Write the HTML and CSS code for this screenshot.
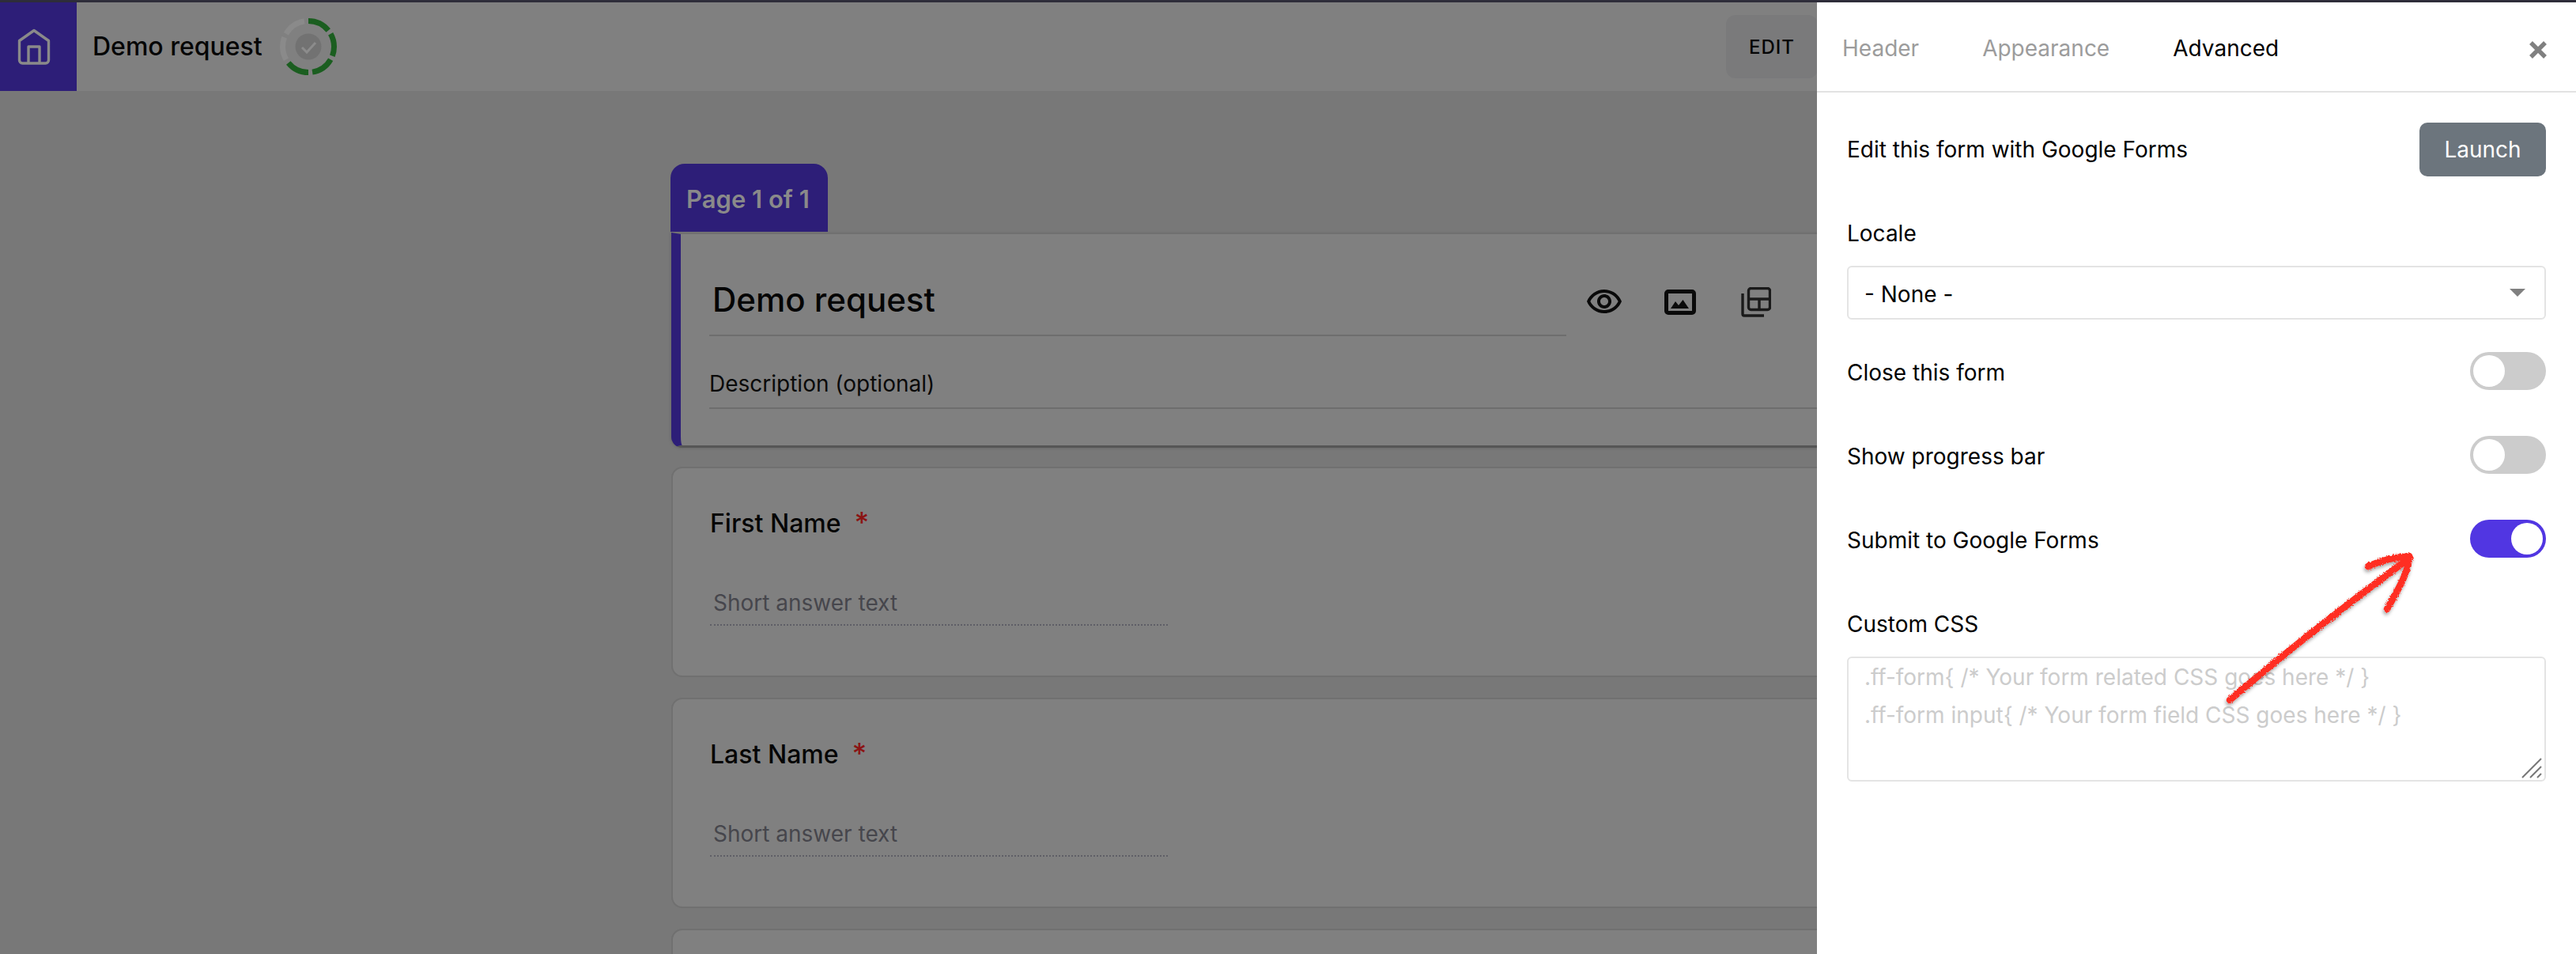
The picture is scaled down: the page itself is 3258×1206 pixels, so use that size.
FILE: index.html
```html
<!DOCTYPE html>
<html lang="en">
<head>
<meta charset="utf-8">
<title>Demo request</title>
<link rel="stylesheet" href="styles.css">
</head>
<body>
<div class="strip"></div>
<div class="app">
  <header class="topbar">
    <a class="home">
      <svg class="home-icon" width="42" height="46" viewBox="0 0 42 46"><path d="M2.500 15.500 21 2.500l18.500 13V40a4 4 0 0 1-4 4h-29a4 4 0 0 1-4-4z M14 44V23h14v21" fill="none" stroke="#8a8a8a" stroke-width="3.400" stroke-linejoin="round"/></svg>
    </a>
    <h1 class="app-title">Demo request</h1>
    <svg class="status" width="74" height="74" viewBox="0 0 74 74">
      <circle cx="37" cy="37" r="32.500" fill="none" stroke="#1b5e20" stroke-width="7" pathLength="360" stroke-dasharray="51 9 51 9 51 9 51 129" transform="rotate(-90 37 37)"/>
      <circle cx="37" cy="37" r="32.500" fill="none" stroke="#8a8a8a" stroke-width="7" pathLength="360" stroke-dasharray="0 240 51 9 51 9" transform="rotate(-90 37 37)"/>
      <circle cx="37" cy="37" r="16.500" fill="#727272"/>
      <path d="M29 38l6 6 11-12" fill="none" stroke="#8c8c8c" stroke-width="3"/>
    </svg>
    <button class="edit">EDIT</button>
  </header>

  <main class="canvas">
    <div class="form">
      <div class="page-tab">Page 1 of 1</div>
      <section class="card card-head">
        <div class="head-row">
          <div class="form-title">Demo request</div>
          <div class="head-icons">
            <span class="icon-btn"><svg width="48" height="48" viewBox="0 0 24 24"><path fill="#0a0a0a" d="M12 6c3.790 0 7.170 2.130 8.820 5.500C19.170 14.870 15.790 17 12 17s-7.170-2.130-8.820-5.500C4.830 8.130 8.210 6 12 6m0-2C7 4 2.730 7.110 1 11.500 2.730 15.890 7 19 12 19s9.270-3.110 11-7.500C21.270 7.110 17 4 12 4zm0 5c1.380 0 2.500 1.120 2.500 2.500S13.380 14 12 14s-2.500-1.120-2.500-2.500S10.620 9 12 9m0-2c-2.480 0-4.500 2.020-4.500 4.500S9.520 16 12 16s4.500-2.020 4.500-4.500S14.480 7 12 7z"/></svg></span>
            <span class="icon-btn"><svg width="40" height="32" viewBox="0 0 40 32"><rect x="2.500" y="2.500" width="35" height="27" rx="2.500" fill="none" stroke="#0a0a0a" stroke-width="5"/><path d="M8 24l6-9 4 5 5.500-7 7.500 11z" fill="#0a0a0a"/></svg></span>
            <span class="icon-btn"><svg width="38" height="38" viewBox="0 0 38 38"><rect x="9.500" y="1.500" width="27" height="27" rx="3" fill="none" stroke="#1a1a1a" stroke-width="3.400"/><path d="M9.500 15h27M23 15v13.500M2 8v26a2 2 0 0 0 2 2h25" fill="none" stroke="#1a1a1a" stroke-width="3.400"/></svg></span>
          </div>
        </div>
        <div class="form-desc">Description (optional)</div>
      </section>

      <section class="card card-q">
        <div class="q-label">First Name<span class="req">*</span></div>
        <div class="q-input">Short answer text</div>
      </section>
      <section class="card card-q">
        <div class="q-label">Last Name<span class="req">*</span></div>
        <div class="q-input">Short answer text</div>
      </section>
      <section class="card card-q"></section>
    </div>
  </main>

  <aside class="drawer">
    <nav class="tabs">
      <span class="tab">Header</span>
      <span class="tab">Appearance</span>
      <span class="tab tab-on">Advanced</span>
      <svg class="close" width="26" height="26" viewBox="0 0 26 26"><path d="M4 4l18 18M22 4 4 22" stroke="#808080" stroke-width="5.500" fill="none"/></svg>
    </nav>
    <div class="settings">
      <div class="row row-launch"><span>Edit this form with Google Forms</span><button class="launch">Launch</button></div>
      <div class="field-label locale-label">Locale</div>
      <div class="select"><span class="select-value">- None -</span><svg width="20" height="10" viewBox="0 0 20 10"><path d="M0 0h20L10 10z" fill="#808080"/></svg></div>
      <div class="row row-toggle first"><span class="toggle-text">Close this form</span><span class="toggle"><span class="knob"></span></span></div>
      <div class="row row-toggle"><span class="toggle-text">Show progress bar</span><span class="toggle"><span class="knob"></span></span></div>
      <div class="row row-toggle"><span class="toggle-text">Submit to Google Forms</span><span class="toggle toggle-on"><span class="knob"></span></span></div>
      <div class="field-label css-label">Custom CSS</div>
      <div class="css-box">
        <div>.ff-form{ /* Your form related CSS goes here */ }</div>
        <div>.ff-form input{ /* Your form field CSS goes here */ }</div>
        <svg class="resizer" width="26" height="26" viewBox="0 0 26 26"><path d="M1 25 25 1M11 25 25 11M20 25l5-5" stroke="#777" stroke-width="2" fill="none"/></svg>
      </div>
    </div>
  </aside>

  <svg class="annot" width="3258" height="1206" viewBox="0 0 3258 1206">
    <defs>
      <filter id="chalk" x="-10%" y="-10%" width="120%" height="120%">
        <feTurbulence type="fractalNoise" baseFrequency="0.6" numOctaves="2" seed="4" result="n"/>
        <feDisplacementMap in="SourceGraphic" in2="n" scale="3.500" result="d"/>
        <feDropShadow in="d" dx="-1" dy="3" stdDeviation="2" flood-color="#000" flood-opacity=".35"/>
      </filter>
    </defs>
    <path filter="url(#chalk)" d="M2820 885C2875 838 2960 770 3048 705M2995 716c18-8 36-12 52-13 0 20-16 46-28 67" fill="none" stroke="#ff2d20" stroke-width="8.500" stroke-linecap="round" stroke-linejoin="round"/>
  </svg>
</div>
</body>
</html>
```
FILE: styles.css
```css
* { box-sizing: border-box; }
html, body { margin: 0; padding: 0; height: 100%; overflow: hidden; }
body { font-family: Inter, "Liberation Sans", sans-serif; color: #000; background: #787878; display: flex; flex-direction: column; }
.strip { height: 3px; background: #2e2d3a; flex: none; }
.app { position: relative; flex: 1; display: flex; flex-direction: column; overflow: hidden; }

.topbar { height: 112px; background: #808080; display: flex; align-items: center; flex: none; }
.home { width: 97px; height: 112px; background: #2d1e78; display: flex; align-items: center; justify-content: center; flex: none; padding-right: 11px; }
.home-icon { display: block; }
.app-title { margin: 0 0 0 20px; font-size: 32px; font-weight: 500; line-height: 40px; color: #050505; }
.status { margin-left: 21px; flex: none; }
.edit { margin-left: auto; margin-right: 959px; height: 80px; width: 116px; border: 0; border-radius: 12px; background: #7a7a7b; font: 500 24px Inter, sans-serif; letter-spacing: 1px; color: #050505; padding: 0; }

.canvas { flex: 1; overflow: hidden; }
.form { width: 1562px; margin: 0 auto; padding-top: 92px; }
.page-tab { width: 199px; height: 86px; background: #2d1e78; border-radius: 18px 18px 0 0; color: #8a8a8a; font-size: 31px; font-weight: 600; padding: 25px 0 0 20px; line-height: 40px; }
.card { background: #808080; border: 2px solid #707070; border-radius: 14px; margin-left: 1px; }
.card-head { height: 272px; margin-top: 1px; border-left: 12px solid #2d1e78; border-top-left-radius: 0; border-top-right-radius: 0; border-bottom: 3px solid #565656; padding: 0 0 0 36px; box-shadow: -1px 1px 3px #6a6a6a; }
.head-row { display: flex; height: 129px; }
.form-title { width: 1084px; height: 129px; padding: 57px 0 0 4px; font-size: 42px; line-height: 52px; font-weight: 500; color: #050505; border-bottom: 2px solid #6e6e6e; }
.head-icons { display: flex; padding-top: 62px; }
.icon-btn { width: 96px; height: 48px; display: flex; align-items: center; justify-content: center; }
.form-desc { margin-top: 40px; height: 52px; font-size: 28px; line-height: 40px; color: #0a0a0a; border-bottom: 2px solid #6e6e6e; }
.card-q { height: 266px; margin-top: 24px; padding: 50px 0 0 47px; }
.card-q + .card-q { margin-top: 26px; }
.q-label { font-size: 32px; line-height: 40px; font-weight: 500; color: #050505; }
.req { color: #8b1414; margin-left: 17px; font-size: 36px; line-height: 0; }
.q-input { margin-top: 60px; width: 579px; height: 49px; padding: 0 0 0 4px; font-size: 28px; line-height: 40px; color: #46464c; border-bottom: 2px dotted #5e5e66; }

.drawer { position: absolute; top: 0; right: 0; bottom: 0; width: 960px; background: #fff; }
.tabs { height: 114px; border-bottom: 2px solid #e2e2e2; position: relative; display: flex; align-items: center; padding: 4px 0 0 32px; gap: 80px; font-size: 28px; }
.tab { color: #9c9c9c; line-height: 40px; }
.tab-on { color: #000; }
.close { position: absolute; left: 899px; top: 47px; }
.settings { padding: 38px 38px 0 38px; font-size: 28px; color: #000; }
.row { display: flex; align-items: center; justify-content: space-between; line-height: 40px; }
.launch { width: 160px; height: 68px; border: 0; border-radius: 10px; background: #6c757d; color: #fff; font: 400 28px Inter, sans-serif; padding: 0; }
.field-label { line-height: 40px; }
.locale-label { margin-top: 52px; }
.select { margin-top: 21px; height: 68px; border: 2px solid #e4e4e4; border-radius: 6px; display: flex; align-items: center; justify-content: space-between; padding: 0 24px 0 20px; }
.select-value { padding-top: 3px; }
.row-toggle { height: 48px; margin-top: 58px; }
.row-toggle.first { margin-top: 41px; }
.toggle-text { padding-top: 3px; }
.toggle { width: 96px; height: 48px; border-radius: 24px; background: #cccccc; padding: 4px; display: flex; }
.knob { width: 40px; height: 40px; border-radius: 50%; background: #fff; }
.toggle-on { background: #5136e2; justify-content: flex-end; }
.css-label { margin-top: 64px; }
.css-box { position: relative; margin-top: 21px; height: 158px; border: 2px solid #e4e4e4; border-radius: 6px; padding: 0 0 0 20px; color: #cccccc; line-height: 48px; }
.resizer { position: absolute; right: 3px; bottom: 2px; }
.annot { position: absolute; left: 0; top: -3px; pointer-events: none; }
```
